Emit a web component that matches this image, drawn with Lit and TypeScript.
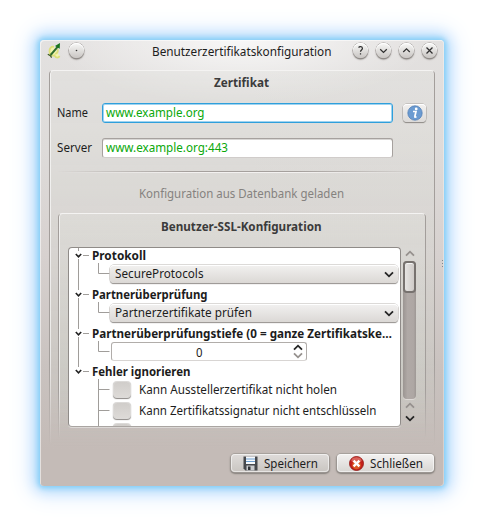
import { LitElement, html, svg, css } from "lit";
import { customElement } from "lit/decorators.js";

/* One line of text, set to an exact advance width; the baseline sits 12px below the top. */
const label = (text: string, width: number, kind = "") => html`
  <svg class="label ${kind}" width=${width} height="16">
    <text x="0" y="12" textLength=${width} lengthAdjust="spacingAndGlyphs">${text}</text>
  </svg>`;

const chevron = (up = false, kind = "") => html`
  <svg class="chev ${kind}" width="10" height="7" viewBox="0 0 10 7">
    <path d=${up ? "M1 5.7 5 1.7 9 5.7" : "M1 1.3 5 5.3 9 1.3"} />
  </svg>`;

const titleGlyphs = {
  dot: svg`<circle cx="7.5" cy="7.5" r=".8" fill="#333" stroke="none" />`,
  help: svg`<path d="M5.6 4.6C6.4 3.2 9.5 3.3 9.4 5.5 9.3 7 7.5 7 7.5 8.8M7.5 10.2v1.4" />`,
  down: svg`<path d="M4.2 6.3 7.5 9.4 10.8 6.3" />`,
  up: svg`<path d="M4.2 9 7.5 5.9 10.8 9" />`,
  close: svg`<path d="M4.5 4.5 10.5 10.5M10.5 4.5 4.5 10.5" />`,
};
const round = (name: keyof typeof titleGlyphs) => html`
  <span class="round"><svg width="15" height="15">${titleGlyphs[name]}</svg></span>`;

const header = (text: string, width: number, last = false) => html`
  <div class="row head">
    <svg class="gutter" width="23" height="19">
      <path d=${last ? "M9.5 0v5M14 9.5h6" : "M9.5 0v5M9.5 13v6M14 9.5h6"} />
      <path class="mark" d="M6.8 8 9.5 10.8 12.2 8" />
    </svg>
    ${label(text, width, "bold")}
  </div>`;

const child = (content: unknown) => html`
  <div class="row child">
    <svg class="gutter" width="41" height="20"><path d="M9.5 0v20M29.5 -2v10.5h11" /></svg>
    ${content}
  </div>`;

const combo = (text: string, width: number) =>
  child(html`<div class="combo">${label(text, width)}${chevron()}</div>`);

const check = (text: string, width: number) => html`
  <div class="row check">
    <svg class="gutter" width="45" height="21"><path d="M29.5 0v21M29.5 10.5h11" /></svg>
    <span class="box"></span>${label(text, width)}
  </div>`;

@customElement("app-root")
export class AppRoot extends LitElement {
  static styles = css`
    :host { display: block; box-sizing: border-box; width: 484px; height: 526px; padding: 40px;
      background: #fff; overflow: hidden; font-family: "Noto Sans", "Open Sans", sans-serif; }
    * { box-sizing: border-box; }
    svg { display: block; flex: none; }
    .label { overflow: visible; font-size: 13px; fill: #1d1d1d; }
    .label.bold { font-weight: 700; font-size: 12.6px; fill: #1c1c1c; }
    .label.title { font-weight: 700; font-size: 12.6px; fill: #3b3b3b; }
    .label.green { fill: #0aa80a; }
    .label.dim { fill: #85827f; }
    .chev path { fill: none; stroke: #252525; stroke-width: 1.8; }
    .chev.pale path { stroke: #96918e; }

    .window { width: 404px; height: 446px; display: flex; flex-direction: column; border-radius: 4px;
      background:
        radial-gradient(ellipse 190px 64px at 50% 0, rgba(255,255,255,.75), rgba(255,255,255,0)),
        linear-gradient(#e3e1e0 0, #dedbd9 110px, #d7d1cf 215px, #c9c2bf 330px, #c4bbb7 410px);
      box-shadow: inset 1px 1px 0 rgba(255,255,255,.55), inset -1px 0 0 rgba(255,255,255,.3),
        0 0 5px 2px #84cff7, 0 0 13px 5px #b0dafb, 0 0 24px 8px #d8e9fe; }
    .titlebar { height: 30px; display: flex; align-items: flex-start; padding: 3px 7px 0 7px; }
    .titlebar .logo { margin: -1px 7px 0 0; }
    .titlebar .label { margin: 1px 21.5px 0 auto; }
    .round { width: 15px; height: 15px; flex: none; border-radius: 50%; margin: 0 8px 0 0;
      background: linear-gradient(#f8f8f7, #c9c6c3);
      box-shadow: 0 0 0 .6px #a19d9a, 0 1.5px 1.5px #77736f, inset 0 1px 0 #fff; }
    .round:last-child { margin-right: 0; }
    .round svg { fill: none; stroke: #303030; stroke-width: 1.25; }

    .group { position: relative; display: flex; flex-direction: column; }
    .group::before { content: ""; position: absolute; inset: 0; pointer-events: none; border-radius: 4px;
      border: 1px solid; border-color: #f4f3f2 #a39e9b transparent #a39e9b; border-bottom: 0;
      box-shadow: inset 1px 0 0 rgba(255,255,255,.6), 1px 0 0 rgba(255,255,255,.65);
      background: linear-gradient(rgba(226,226,222,.35), rgba(200,205,195,.28));
      -webkit-mask-image: linear-gradient(#000 78%, transparent); mask-image: linear-gradient(#000 78%, transparent); }
    .group > * { position: relative; }
    .outer { margin: 0 9px; width: 386px; height: 376px; padding: 5px 8px 0; }
    .inner { width: 368px; height: 226px; margin: 11px 0 0 1px; padding: 6px 9px 0 10px; }
    .outer > .title { margin-left: 157px; }

    .field { display: flex; align-items: center; height: 20px; margin-top: 12px; }
    .field + .field { margin-top: 15px; }
    .field .name { width: 45px; margin-top: -1px; }
    .input { width: 291px; height: 20px; padding: 1px 4px 0 3px; border-radius: 3px; background: #fff;
      border: 1px solid #a6a19e; border-bottom-color: #d0ccca; box-shadow: inset 0 1px 0 #d8d6d4; }
    .input.focus { border-color: #2f9fdb; box-shadow: inset 0 0 0 1px #9fd3f0; }
    .info { width: 23px; height: 18px; margin: -1px 0 0 10px; border-radius: 4px; display: flex;
      justify-content: center; align-items: center; background: linear-gradient(#f2f1f0, #dcdad8);
      box-shadow: 0 0 0 .5px #a9a5a2, 0 1px 1px #77736f, inset 0 1px 0 #fff; }
    .sep { height: 2px; margin-top: 13px;
      background: linear-gradient(#a5a09d 50%, #f3f1f0 50%);
      -webkit-mask-image: linear-gradient(90deg, transparent, #000 35%, #000 65%, transparent);
      mask-image: linear-gradient(90deg, transparent, #000 35%, #000 65%, transparent); }
    .note { padding: 13px 0 0 82px; }
    .caption { padding-left: 93px; }

    .area { display: flex; margin-top: 12px; }
    .list { width: 333px; height: 180px; overflow: hidden; border: 1px solid #8f8b88; border-radius: 4px;
      border-bottom-color: #aaa5a2; background: #fff; box-shadow: 0 1px 0 rgba(255,255,255,.4); }
    .tree { margin-top: -2px; }
    .row { display: flex; }
    .gutter { overflow: hidden; }
    .gutter path { fill: none; stroke: #a09d9a; stroke-width: 1; }
    .gutter .mark { stroke: #222; stroke-width: 1.6; }
    .head { height: 19px; }
    .head .label { margin-top: 2px; }
    .child { height: 20px; }
    .child .gutter { overflow: visible; }
    .combo { width: 288px; height: 18px; display: flex; justify-content: space-between; align-items: center;
      padding: 0 4px 0 5px; border-radius: 4px; background: linear-gradient(#f2f1f0, #dbd8d5);
      box-shadow: 0 0 0 .5px #b9b5b2, 0 1px 1px #777370, inset 0 1px 0 #fff; }
    .child:nth-child(6) { height: 19px; }
    .spin { width: 196px; height: 19px; margin: -1px 0 0 1px; display: flex; align-items: center; padding: 0 3px 0 84px;
      border-radius: 3px; background: #fff; border: 1px solid #b1adaa; border-bottom-color: #d8d5d3; }
    .spin .label { margin-top: 2px; }
    .arrows { margin-left: auto; display: flex; flex-direction: column; gap: 1px; }
    .check { height: 21px; align-items: center; }
    .first { margin-top: -2px; }
    .box { width: 16px; height: 15px; margin-right: 9px; border-radius: 3px; background: linear-gradient(#d0cdca, #dddad7);
      box-shadow: 0 0 0 1px #dcdad8, 0 1px 1px 1px #8c8885; flex: none; }
    .check .label { margin-top: 1px; }

    .scroll { width: 13px; height: 180px; margin-left: 2px; display: flex; flex-direction: column; align-items: center; }
    .scroll > .chev { margin-top: 3px; }
    .groove { width: 13px; height: 138px; margin-top: 4px; border-radius: 4px; background: linear-gradient(90deg,#9b9592,#b0a9a6 35%,#aea7a4 80%,#9e9895);
      box-shadow: 0 1px 0 #ded9d7; }
    .thumb { height: 32px; border-radius: 4px; border: 2px solid #77726f; background: linear-gradient(90deg, #e6e4e2, #cfcbc8);
      box-shadow: inset 0 1px 0 #f5f5f4; }
    .scroll > .groove + .chev { margin-top: 3px; }
    .scroll > .chev:last-child { margin-top: 6px; }

    .buttons { display: flex; justify-content: flex-end; gap: 8px; padding: 8px 10px 0 0; }
    .button { height: 18px; display: flex; align-items: center; border-radius: 4px; padding-left: 12px;
      background: linear-gradient(#dfdcda, #c9c5c1);
      box-shadow: 0 0 0 .7px #a39d99, 0 1px 1.5px 1px #85807c, inset 0 0 0 1px rgba(255,255,255,.55); }
    .button.save { width: 98px; }
    .button.close { width: 97px; background: linear-gradient(#f3f2f1, #d8d6d3); }
    .button .label { margin: 1px 0 0 6px; }
    .grip { position: absolute; left: 442px; top: 260px; }
  `;

  render() {
    return html`
      <main class="window">
        <header class="titlebar">
          <svg class="logo" width="15" height="18" viewBox="0 0 15 18">
            <path d="M7 4.8C4 4.2 2.4 6.6 2.5 9.4 2.6 12.8 5 14.4 7.4 13.4 9 16.6 12 16 12.4 13.8M10.6 7C11.4 9.6 10.2 11.4 8.2 12"
              fill="#f3f5b0" stroke="#dde07a" stroke-width="1.8" />
            <path d="M3.6 13 10.8 4.6" stroke="#2f6d2d" stroke-width="2" />
            <path d="M8 4 13 1l-.3 5.8z" fill="#17741b" />
            <path d="M.8 12.2l2.6 1.4 1.2 2" stroke="#3b5920" stroke-width="1.2" fill="none" />
          </svg>
          ${round("dot")}
          ${label("Benutzerzertifikatskonfiguration", 179.5)}
          ${round("help")}${round("down")}${round("up")}${round("close")}
        </header>

        <section class="group outer">
          ${label("Zertifikat", 55, "title")}
          <div class="field">
            <div class="name">${label("Name", 31)}</div>
            <div class="input focus">${label("www.example.org", 98.5, "green")}</div>
            <div class="info">
              <svg width="16" height="16" viewBox="0 0 16 16">
                <circle cx="8" cy="8" r="7.2" fill="#6b9bd1" stroke="#4a7ab3" stroke-width=".7" />
                <circle cx="9.2" cy="3.9" r="1.4" fill="#fff" />
                <path d="M6 6.5h3L7.8 11.5q-.3 1 1.7.2" fill="none" stroke="#fff" stroke-width="1.7" />
              </svg>
            </div>
          </div>
          <div class="field">
            <div class="name">${label("Server", 35)}</div>
            <div class="input">${label("www.example.org:443", 122, "green")}</div>
          </div>
          <div class="sep"></div>
          <div class="note">${label("Konfiguration aus Datenbank geladen", 205, "dim")}</div>

          <section class="group inner">
            <div class="caption">${label("Benutzer-SSL-Konfiguration", 160.5, "title")}</div>
            <div class="area">
              <div class="list"><div class="tree">
                ${header("Protokoll", 54)}
                ${combo("SecureProtocols", 88.5)}
                ${header("Partnerüberprüfung", 115.5)}
                ${combo("Partnerzertifikate prüfen", 137)}
                ${header("Partnerüberprüfungstiefe (0 = ganze Zertifikatske…", 300)}
                ${child(html`<div class="spin">${label("0", 6.5)}
                  <span class="arrows">${chevron(true)}${chevron(false, "pale")}</span></div>`)}
                ${header("Fehler ignorieren", 98.5, true)}
                <div class="first">
                  ${check("Kann Ausstellerzertifikat nicht holen", 198)}
                  ${check("Kann Zertifikatssignatur nicht entschlüsseln", 237.5)}
                  ${check("Kann Ausstellerschlüssel nicht entschlüsseln", 242)}
                </div>
              </div></div>
              <div class="scroll">
                ${chevron(true, "pale")}
                <div class="groove"><div class="thumb"></div></div>
                ${chevron(true, "pale")}${chevron()}
              </div>
            </div>
          </section>
        </section>

        <footer class="buttons">
          <div class="button save">
            <svg width="15" height="15" viewBox="0 0 15 15">
              <path d="M.5.5h14v14h-12l-2-2z" fill="#46484c" />
              <path d="M3 .5h9v7.5H3z" fill="#f6f9fc" />
              <path d="M3 3h9M3 5.5h9" stroke="#6f9fcf" />
              <path d="M3.5 9.5h8v5h-8z" fill="#c9cbce" />
              <path d="M5 10.5h2.5v3.5H5z" fill="#303236" />
            </svg>
            ${label("Speichern", 54)}
          </div>
          <div class="button close">
            <svg width="15" height="15" viewBox="0 0 15 15">
              <circle cx="7.5" cy="7.5" r="7" fill="#c3201c" stroke="#8f1512" stroke-width=".8" />
              <ellipse cx="7.5" cy="4.2" rx="5" ry="3" fill="#e89086" opacity=".6" />
              <circle cx="7.5" cy="9" r="4.3" fill="#e8792a" opacity=".65" />
              <path d="M4.6 4.6l5.8 5.8M10.4 4.6l-5.8 5.8" stroke="#fff" stroke-width="2.3" />
            </svg>
            ${label("Schließen", 53)}
          </div>
        </footer>
        <svg class="grip" width="3" height="8">
          <path d="M.5 0v8" stroke="#7d8990" stroke-dasharray="1 2" fill="none" />
        </svg>
      </main>`;
  }
}
